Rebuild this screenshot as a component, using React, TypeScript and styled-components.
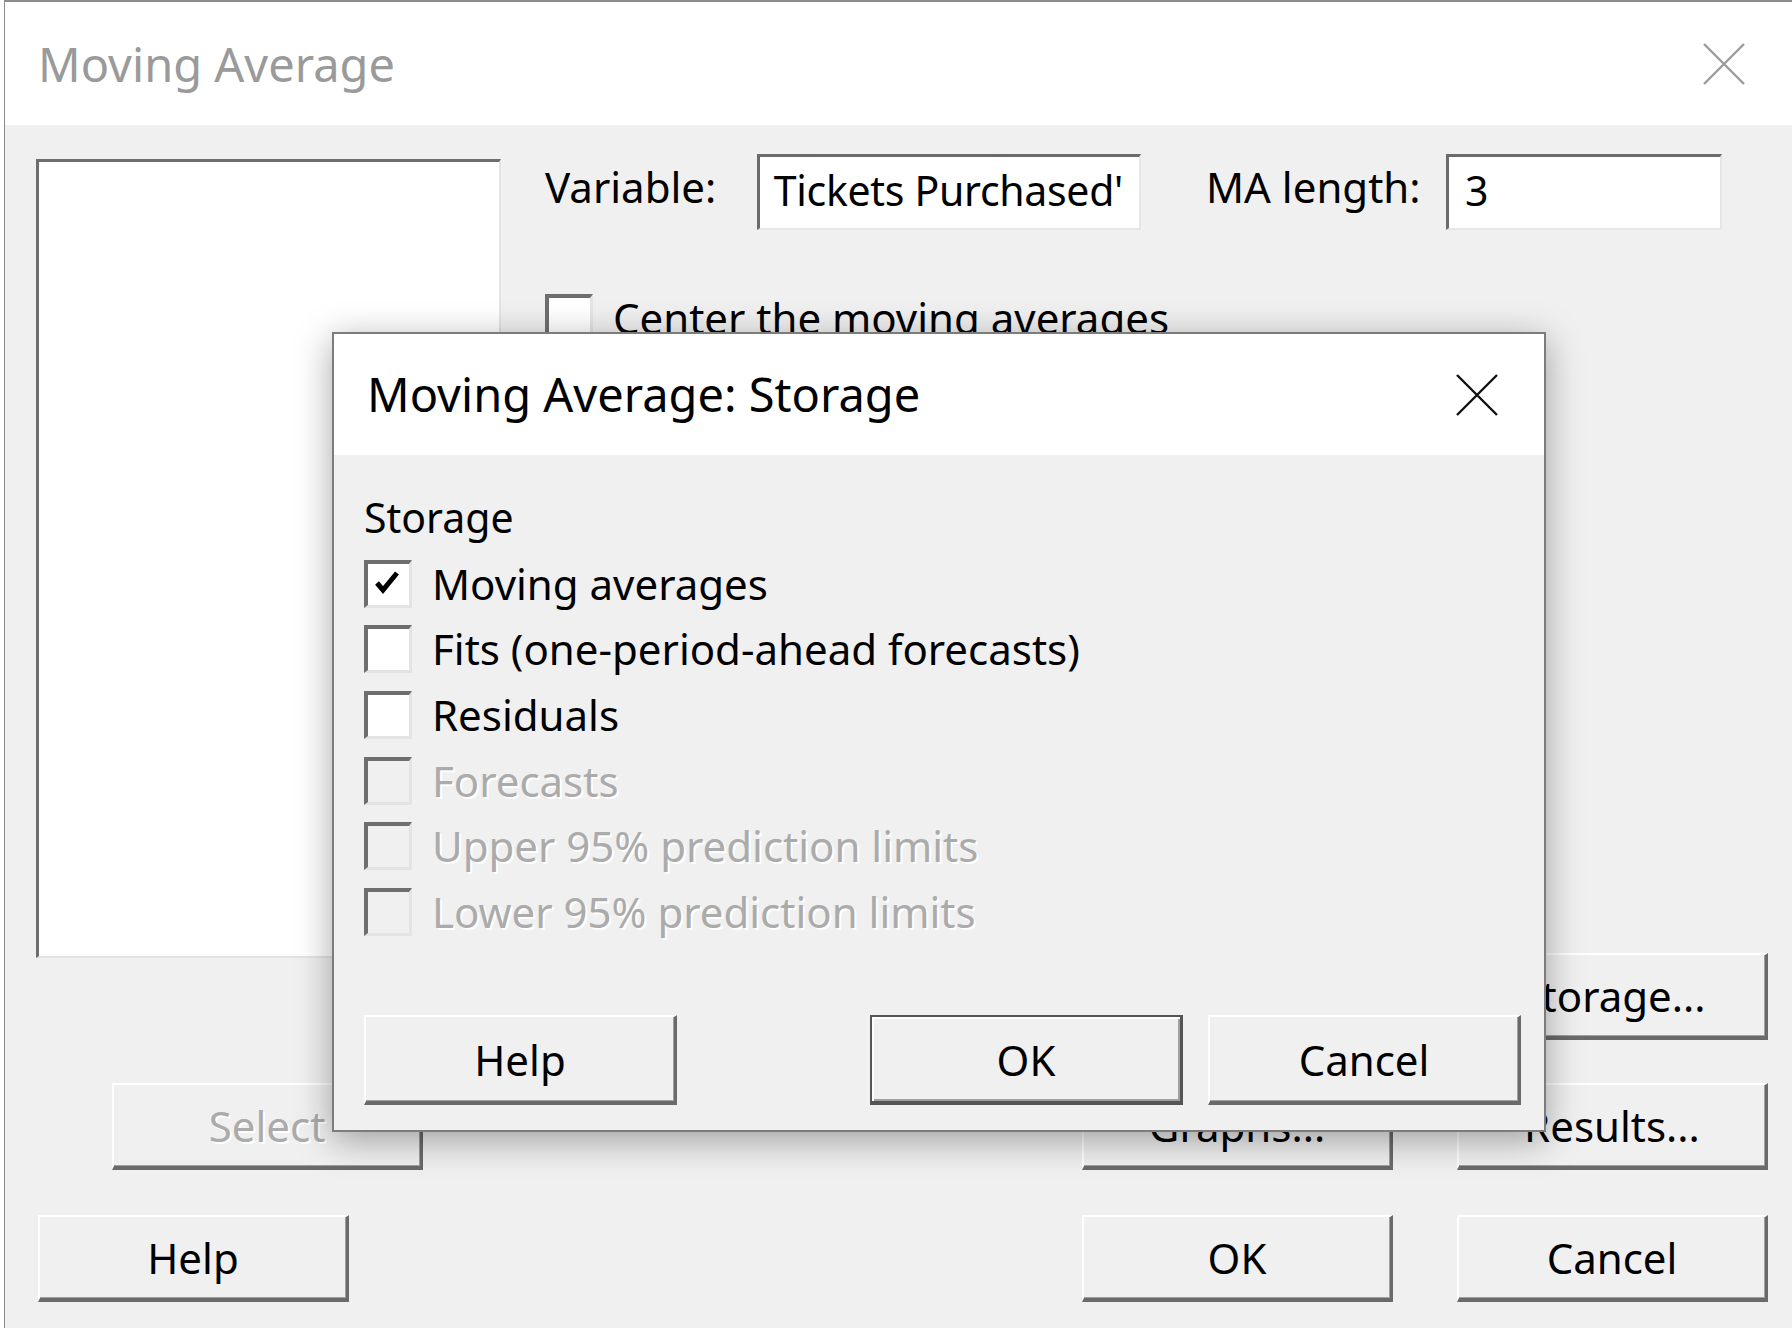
import styled, { createGlobalStyle } from 'styled-components'

const GlobalStyle = createGlobalStyle`
  body {
    margin: 0;
    background: #ffffff;
    font-family: "Noto Sans", "Open Sans", sans-serif;
  }
`

const CloseIcon = ({ color, size }: { color: string; size: number }) => (
  <svg width={size} height={size} viewBox="0 0 42 42">
    <path d="M1 1 L41 41 M41 1 L1 41" stroke={color} strokeWidth="2.4" fill="none" />
  </svg>
)

const CheckMark = () => (
  <svg width="30" height="28" viewBox="0 0 30 28">
    <path d="M4 14 L10 21 L24 4" stroke="#000" strokeWidth="5" fill="none" />
  </svg>
)

const CheckBox = ({ checked, disabled, label }: { checked?: boolean; disabled?: boolean; label: string }) => (
  <CheckRow>
    <Box $disabled={disabled}>{checked && <CheckMark />}</Box>
    <CheckLabel $disabled={disabled}>{label}</CheckLabel>
  </CheckRow>
)

export default function App() {
  return (
    <Page>
      <GlobalStyle />
      <Window>
        <TitleBar>
          <Title>Moving Average</Title>
          <CloseIcon color="#9c9c9c" size={42} />
        </TitleBar>
        <Body>
          <MainRow>
            <ListBox />
            <RightPane>
              <FieldRow>
                <FieldLabel $width={212}>Variable:</FieldLabel>
                <Field $width={384}>
                  <span>Tickets Purchased'</span>
                </Field>
                <FieldLabel $width={240} $gap={65}>MA length:</FieldLabel>
                <Field $width={276} $left>
                  <span>3</span>
                </Field>
              </FieldRow>
              <CenterRow>
                <CheckBox label="Center the moving averages" />
              </CenterRow>
              <StorageButton>Storage...</StorageButton>
            </RightPane>
          </MainRow>
          <ButtonRow $top={43}>
            <Button $disabled $offset={76}>Select</Button>
            <Spacer />
            <Button>Graphs...</Button>
            <Button $offset={64}>Results...</Button>
          </ButtonRow>
          <ButtonRow $top={45}>
            <Button $offset={2}>Help</Button>
            <Spacer />
            <Button>OK</Button>
            <Button $offset={64}>Cancel</Button>
          </ButtonRow>
        </Body>
      </Window>

      <Dialog>
        <DialogTitleBar>
          <DialogTitle>Moving Average: Storage</DialogTitle>
          <CloseIcon color="#111" size={42} />
        </DialogTitleBar>
        <DialogBody>
          <GroupLabel>Storage</GroupLabel>
          <CheckList>
            <CheckBox checked label="Moving averages" />
            <CheckBox label="Fits (one-period-ahead forecasts)" />
            <CheckBox label="Residuals" />
            <CheckBox disabled label="Forecasts" />
            <CheckBox disabled label="Upper 95% prediction limits" />
            <CheckBox disabled label="Lower 95% prediction limits" />
          </CheckList>
          <DialogButtons>
            <DialogButton>Help</DialogButton>
            <Spacer />
            <DialogButton $default>OK</DialogButton>
            <DialogButton $offset={25}>Cancel</DialogButton>
          </DialogButtons>
        </DialogBody>
      </Dialog>
    </Page>
  )
}

const Page = styled.div`
  position: relative;
  width: 1792px;
  height: 1328px;
  overflow: hidden;
`
const Window = styled.div`
  margin-left: 4px;
  height: 1328px;
  box-sizing: border-box;
  border-left: 1px solid #8c8c8c;
  border-top: 2px solid #8c8c8c;
  display: flex;
  flex-direction: column;
`
const TitleBar = styled.div`
  height: 123px;
  flex-shrink: 0;
  background: #ffffff;
  display: flex;
  align-items: center;
  justify-content: space-between;
  padding: 0 47px 0 33px;
`
const Title = styled.div`
  font-size: 47px;
  color: #9a9a9a;
  line-height: 1;
  margin-top: 2px;
`
const Body = styled.div`
  flex: 1;
  background: #f0f0f0;
  padding: 29px 24px 0 31px;
  display: flex;
  flex-direction: column;
`
const MainRow = styled.div`
  display: flex;
  height: 886px;
`
const ListBox = styled.div`
  margin-top: 5px;
  width: 465px;
  height: 799px;
  box-sizing: border-box;
  background: #ffffff;
  border-style: solid;
  border-width: 3px 2px 2px 3px;
  border-color: #6d6d6d #e3e3e3 #e3e3e3 #6d6d6d;
`
const RightPane = styled.div`
  flex: 1;
  margin-left: 44px;
  display: flex;
  flex-direction: column;
`
const FieldRow = styled.div`
  display: flex;
  align-items: center;
  height: 76px;
`
const FieldLabel = styled.div<{ $width: number; $gap?: number }>`
  width: ${p => p.$width}px;
  margin-left: ${p => p.$gap ?? 0}px;
  font-size: 42px;
  color: #000;
  white-space: nowrap;
  margin-top: -12px;
`
const Field = styled.div<{ $width: number; $left?: boolean }>`
  width: ${p => p.$width}px;
  height: 76px;
  box-sizing: border-box;
  background: #ffffff;
  border-style: solid;
  border-width: 3px 2px 2px 3px;
  border-color: #6b6b6b #e6e6e6 #e6e6e6 #6b6b6b;
  display: flex;
  align-items: center;
  justify-content: ${p => (p.$left ? 'flex-start' : 'flex-end')};
  padding: 0 16px 0 16px;
  font-size: 41px;
  letter-spacing: -0.3px;
  color: #000;
  white-space: nowrap;
  span {
    margin-top: -6px;
  }
`
const CenterRow = styled.div`
  margin-top: 55px;
`
const CheckRow = styled.div`
  display: flex;
  align-items: center;
  gap: 20px;
  height: 65.6px;
`
const Box = styled.div<{ $disabled?: boolean }>`
  width: 48px;
  height: 48px;
  box-sizing: border-box;
  flex-shrink: 0;
  background: ${p => (p.$disabled ? '#f0f0f0' : '#ffffff')};
  border-style: solid;
  border-width: 4px 3px 3px 4px;
  border-color: #6e6e6e #e4e4e4 #e4e4e4 #6e6e6e;
  display: flex;
  align-items: flex-start;
  justify-content: flex-start;
  svg {
    margin: 5px 0 0 5px;
  }
`
const CheckLabel = styled.div<{ $disabled?: boolean }>`
  font-size: 42px;
  line-height: 48px;
  white-space: nowrap;
  color: ${p => (p.$disabled ? '#ababab' : '#000')};
  text-shadow: ${p => (p.$disabled ? '2px 2px 0 #ffffff' : 'none')};
`
const ButtonRow = styled.div<{ $top: number }>`
  display: flex;
  margin-top: ${p => p.$top}px;
`
const Spacer = styled.div`
  flex: 1;
`
const Button = styled.div<{ $disabled?: boolean; $offset?: number }>`
  width: 311px;
  height: 87px;
  box-sizing: border-box;
  margin-left: ${p => p.$offset ?? 0}px;
  background: #f0f0f0;
  border-style: solid;
  border-width: 2px 3px 4px 2px;
  border-color: #ffffff #6a6a6a #6a6a6a #ffffff;
  box-shadow: inset -1px -1px 0 #a0a0a0;
  display: flex;
  align-items: center;
  justify-content: center;
  font-size: 42px;
  color: ${p => (p.$disabled ? '#ababab' : '#000')};
  text-shadow: ${p => (p.$disabled ? '2px 2px 0 #ffffff' : 'none')};
  white-space: nowrap;
`
const StorageButton = styled(Button)`
  margin-top: auto;
  align-self: flex-end;
`
const Dialog = styled.div`
  position: absolute;
  left: 332px;
  top: 332px;
  width: 1214px;
  height: 800px;
  box-sizing: border-box;
  border: 2px solid #7c7c7c;
  display: flex;
  flex-direction: column;
  box-shadow: 0 8px 34px rgba(0, 0, 0, 0.35);
`
const DialogTitleBar = styled.div`
  height: 121px;
  flex-shrink: 0;
  background: #ffffff;
  display: flex;
  align-items: center;
  justify-content: space-between;
  padding: 0 46px 0 33px;
`
const DialogTitle = styled.div`
  font-size: 47px;
  color: #000;
  line-height: 1;
`
const DialogBody = styled.div`
  flex: 1;
  background: #f0f0f0;
  padding: 38px 23px 25px 30px;
  display: flex;
  flex-direction: column;
`
const GroupLabel = styled.div`
  font-size: 41px;
  line-height: 48px;
  color: #000;
`
const CheckList = styled.div`
  margin-top: 10px;
  display: flex;
  flex-direction: column;
`
const DialogButtons = styled.div`
  margin-top: auto;
  display: flex;
`
const DialogButton = styled(Button)<{ $default?: boolean }>`
  width: 313px;
  height: 90px;
  border-color: ${p => (p.$default ? '#555555 #555555 #555555 #555555' : '#ffffff #6a6a6a #6a6a6a #ffffff')};
  box-shadow: ${p => (p.$default ? 'inset 2px 2px 0 #ffffff, inset -2px -2px 0 #a0a0a0' : 'inset -1px -1px 0 #a0a0a0')};
`
